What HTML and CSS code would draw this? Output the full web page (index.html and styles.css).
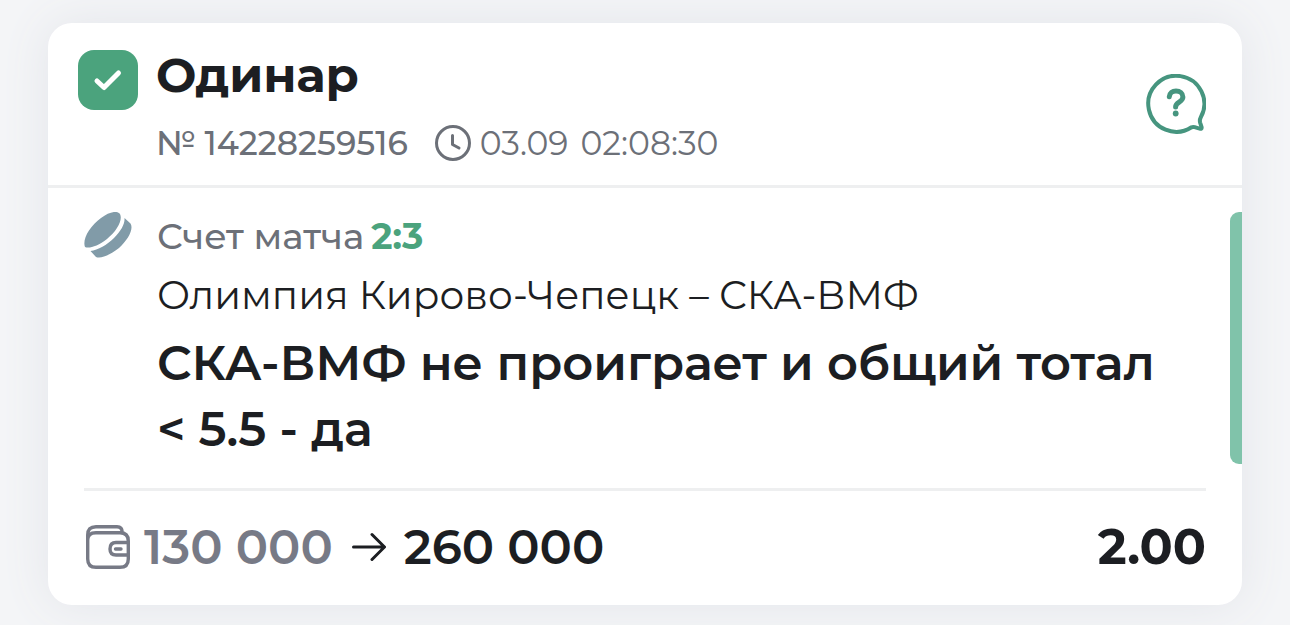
FILE: index.html
```html
<!DOCTYPE html>
<html lang="ru">
<head>
<meta charset="utf-8">
<meta name="viewport" content="width=device-width, initial-scale=1">
<title>Одинар</title>
<link rel="stylesheet" href="styles.css">
</head>
<body>
<main class="feed">
  <article class="bet">
    <header class="bet-head">
      <span class="check">
        <input class="check-box" type="checkbox" id="bet-check" checked>
        <svg class="check-mark" viewBox="0 0 60 60" aria-hidden="true"><path d="M19 31 26 37.500 40.500 23"/></svg>
      </span>
      <div class="bet-info">
        <h1 class="bet-type"><label for="bet-check">Одинар</label></h1>
        <div class="bet-meta">
          <span class="bet-number">№ 14228259516</span>
          <span class="bet-time">
            <svg class="clock" viewBox="0 0 36 36" aria-hidden="true"><circle cx="18" cy="18" r="16.500"/><path d="M17.500 10.500V19.500L24 23"/></svg>
            <time class="stamp"><span>03.09</span><span>02:08:30</span></time>
          </span>
        </div>
      </div>
      <button class="help" type="button" aria-label="Помощь">
        <svg viewBox="0 0 60 60" aria-hidden="true">
          <path class="bubble" d="M45.500 53.300A28 28 0 1 1 54.700 43.500Q53.400 46 54.100 48.600L55.600 53.200Q56 55.400 53.600 54.700L48.600 53.200Q47 52.700 45.500 53.300Z"/>
          <path class="mark" d="M23.300 22.800C23.600 18.900 26.400 17 30 17C34 17 36.900 19.300 36.900 22.900C36.900 28.200 29.600 28 29.600 33"/>
          <circle class="dot" cx="29.700" cy="39.500" r="2.900"/>
        </svg>
      </button>
    </header>
    <section class="bet-body">
      <svg class="puck" viewBox="0 0 48 46" aria-hidden="true">
        <path d="M1 35C-2 27 6 14 17 6C25 0 33-2 36 2C39 8 33 19 23 27C14 34 5 37 1 35Z"/>
        <path d="M40.500 6L46.500 11.500C50 17 44 28 35 36C26 43 17 47 12 45L6.500 39C14 38 23 33 30 26C37 19 41 12 40.500 6Z"/>
      </svg>
      <div class="event">
        <p class="score"><span>Счет матча</span> <b class="score-value">2:3</b></p>
        <p class="teams">Олимпия Кирово-Чепецк – СКА-ВМФ</p>
        <h2 class="outcome">СКА-ВМФ не проиграет и общий тотал &lt; 5.5 - да</h2>
      </div>
      <span class="result-bar"></span>
    </section>
    <footer class="bet-foot">
      <svg class="wallet" viewBox="0 0 44 44" aria-hidden="true">
        <path d="M1.700 15V34Q1.700 42.300 10 42.300H34Q42.300 42.300 42.300 34V16Q42.300 7.800 34 7.800H10Q1.700 7.800 1.700 15ZM1.700 15V10Q1.700 1.700 10 1.700H31Q36.300 1.700 36.300 7.800"/>
        <path d="M42.300 17.500H30Q24 17.500 24 24Q24 30 30 30H42.300M29.500 24H35"/>
      </svg>
      <span class="stake">130 000</span>
      <svg class="arrow" viewBox="0 0 34 30" aria-hidden="true"><path d="M1.500 15H32M20 2.500 32.500 15 20 27.500"/></svg>
      <span class="payout">260 000</span>
      <span class="odds">2.00</span>
    </footer>
  </article>
</main>
</body>
</html>
```
FILE: styles.css
```css
* {
  box-sizing: border-box;
}

body {
  margin: 0;
  background: #f4f5f7;
  color: #1c1e22;
  font-family: Montserrat, Inter, "Noto Sans", sans-serif;
}

h1, h2, p {
  margin: 0;
}

svg {
  display: block;
  flex: none;
  fill: none;
  stroke-linecap: round;
  stroke-linejoin: round;
}

.feed {
  padding: 23px 48px 20px;
}

.bet {
  border-radius: 24px;
  background: #fff;
  box-shadow: 0 0 48px #e3e5ea;
}

.bet-head {
  display: flex;
  align-items: flex-start;
  gap: 18px;
  padding: 22px 36px 22px 30px;
  border-bottom: 3px solid #eeeff0;
}

.check {
  display: grid;
  flex: none;
  margin-top: 5px;
}

.check-box,
.check-mark {
  grid-area: 1 / 1;
  width: 60px;
  height: 60px;
  margin: 0;
}

.check-box {
  appearance: none;
  border-radius: 16px;
  background: #4ba37d;
}

.check-mark {
  stroke: #fff;
  stroke-width: 5;
  pointer-events: none;
}

.bet-info {
  flex: 1;
}

.bet-type {
  margin-bottom: 18px;
  font-size: 48px;
  font-weight: 700;
  line-height: 60px;
}

.bet-meta,
.bet-time {
  display: flex;
  align-items: center;
}

.bet-meta {
  gap: 27px;
  color: #6c7078;
  font-size: 33px;
  line-height: 40px;
}

.bet-number {
  font-weight: 500;
}

.bet-time {
  gap: 9px;
  font-weight: 400;
}

.stamp {
  display: flex;
  gap: 12px;
}

.clock {
  width: 36px;
  stroke: #6c7078;
  stroke-width: 3;
}

.help {
  align-self: center;
  padding: 0;
  border: 0;
  background: none;
  cursor: pointer;
}

.help svg {
  width: 60px;
}

.bubble,
.mark {
  stroke: #46957f;
  stroke-width: 4;
}

.mark {
  stroke-width: 5;
}

.dot {
  fill: #46957f;
}

.bet-body {
  display: flex;
  align-items: flex-start;
  gap: 25px;
  margin-left: 36px;
  padding: 24px 0;
}

.puck {
  width: 48px;
  fill: #819ba8;
}

.event {
  flex: 1;
  padding: 0 24px 2px 0;
}

.score {
  display: flex;
  gap: 7px;
  color: #6c7078;
  font-size: 36px;
  font-weight: 500;
  line-height: 48px;
}

.score-value {
  color: #4ba37d;
  font-weight: 700;
}

.teams {
  margin: 10px 0;
  font-size: 39px;
  font-weight: 400;
  line-height: 50px;
}

.outcome {
  font-size: 48px;
  font-weight: 600;
  line-height: 66px;
}

.result-bar {
  align-self: stretch;
  width: 12px;
  border-radius: 9px 0 0 9px;
  background: #80c3aa;
}

.bet-foot {
  display: flex;
  align-items: center;
  margin: 0 36px;
  padding: 24px 0 26px;
  border-top: 3px solid #eeeff0;
  font-size: 48px;
  font-weight: 600;
  line-height: 64px;
}

.wallet {
  width: 44px;
  margin: 0 14px 0 2px;
  stroke: #777a86;
  stroke-width: 3.400;
}

.stake {
  color: #777a86;
}

.arrow {
  width: 34px;
  margin: 0 18px 0 19px;
  stroke: #1c1e22;
  stroke-width: 3;
}

.odds {
  margin-left: auto;
  font-size: 49px;
  font-weight: 700;
}
```
